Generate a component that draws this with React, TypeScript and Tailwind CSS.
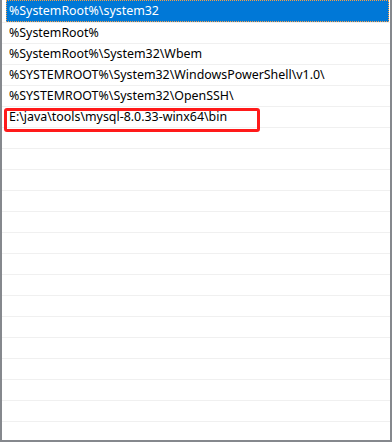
import React from "react";

const items = [
  "%SystemRoot%",
  "%SystemRoot%\\System32\\Wbem",
  "%SYSTEMROOT%\\System32\\WindowsPowerShell\\v1.0\\",
  "%SYSTEMROOT%\\System32\\OpenSSH\\",
  "E:\\java\\tools\\mysql-8.0.33-winx64\\bin",
];

export default function App() {
  const empties = Array.from({ length: 16 });
  return (
    <div
      className="relative w-[392px] h-[442px] overflow-hidden bg-white border-l-2 border-r-2 border-b-2 border-[#85888d] text-[12.4px] text-black"
      style={{ fontFamily: '"Noto Sans", "Noto Sans CJK SC", sans-serif' }}
    >
      <div className="h-[23px] border-b border-[#f0f0f0] pr-[1px] pl-[4px]">
        <div className="h-[22px] bg-[#0078d7] border border-dotted border-[#f5a04a] text-white flex items-center pl-[2px] leading-none">
          %SystemRoot%\system32
        </div>
      </div>
      {items.map((t) => (
        <div
          key={t}
          className="h-[21px] border-b border-[#f0f0f0] flex items-center pl-[7px] leading-none"
        >
          {t}
        </div>
      ))}
      {empties.map((_, i) => (
        <div key={i} className="h-[21px] border-b border-[#f0f0f0]" />
      ))}
      <div className="absolute left-[2px] top-[108px] w-[256px] h-[24px] border-[3px] border-[#ff1a1a] rounded-[3px]" />
    </div>
  );
}
